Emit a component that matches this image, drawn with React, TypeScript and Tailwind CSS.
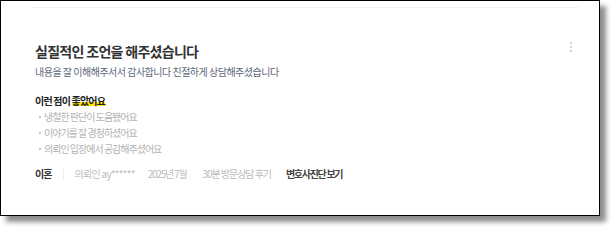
const font = { fontFamily: '"Noto Sans CJK KR", "Noto Sans", sans-serif' }

const points = ['냉철한 판단이 도움됐어요', '이야기를 잘 경청하셨어요', '의뢰인 입장에서 공감해주셨어요']

export default function App() {
  return (
    <div className="w-[612px] h-[228px] bg-white" style={font}>
      <div className="w-[600px] h-[216px] border border-black bg-white shadow-[6px_6px_5px_rgba(0,0,0,0.45)]">
        {/* top divider */}
        <div className="mt-[6px] ml-[32px] mr-[21px] h-px bg-[#f1f1f1]" />

        <div className="pl-[34px] pr-[27px]">
          {/* title row */}
          <div className="mt-[33px] flex items-start justify-between">
            <h2 className="text-[14px] leading-[20px] font-bold tracking-[-0.7px] text-[#333]">
              실질적인 조언을 해주셨습니다
            </h2>
            <div className="mt-[1px] flex flex-col gap-[2px]">
              <span className="block w-[2px] h-[2px] bg-[#d4d4d4]" />
              <span className="block w-[2px] h-[2px] bg-[#d4d4d4]" />
              <span className="block w-[2px] h-[2px] bg-[#d4d4d4]" />
            </div>
          </div>
          <p className="mt-[3px] text-[10px] leading-[16px] tracking-[-0.5px] text-[#5c6878]">
            내용을 잘 이해해주서서 감사합니다 친절하게 상담해주셨습니다
          </p>

          {/* good points */}
          <h3 className="mt-[13px] text-[10px] leading-[16px] font-bold tracking-[-0.8px] text-[#222]">
            이런 점이{' '}
            <span className="bg-[linear-gradient(to_bottom,transparent_62%,#ffe500_62%,#ffe500_84%,transparent_84%)]">
              좋았어요
            </span>
          </h3>
          <ul>
            {points.map((p) => (
              <li key={p} className="flex items-center text-[10px] leading-[16px] tracking-[-1px] text-[#b3b3b3] whitespace-pre">
                <span className="ml-[4px] mr-[3px] w-[2px] h-[2px] bg-[#c4c4c4]" />
                {p}
              </li>
            ))}
          </ul>

          {/* footer */}
          <div className="mt-[9px] flex items-center text-[10px] leading-[16px] whitespace-pre">
            <span className="font-bold text-[#333] tracking-[-1px]">이혼</span>
            <span className="ml-[12px] w-px h-[10px] bg-[#ececec]" />
            <span className="ml-[10px] text-[#bbb] tracking-[-0.7px]">의뢰인 ay******</span>
            <span className="ml-[13px] text-[#bbb] tracking-[-1.2px]">2025년 7월</span>
            <span className="ml-[16px] text-[#bbb] tracking-[-1.05px]">30분 방문상담 후기</span>
            <span className="ml-[15px] font-semibold text-[#444] tracking-[-1.3px]">변호사진단 보기</span>
          </div>
        </div>
      </div>
    </div>
  )
}
